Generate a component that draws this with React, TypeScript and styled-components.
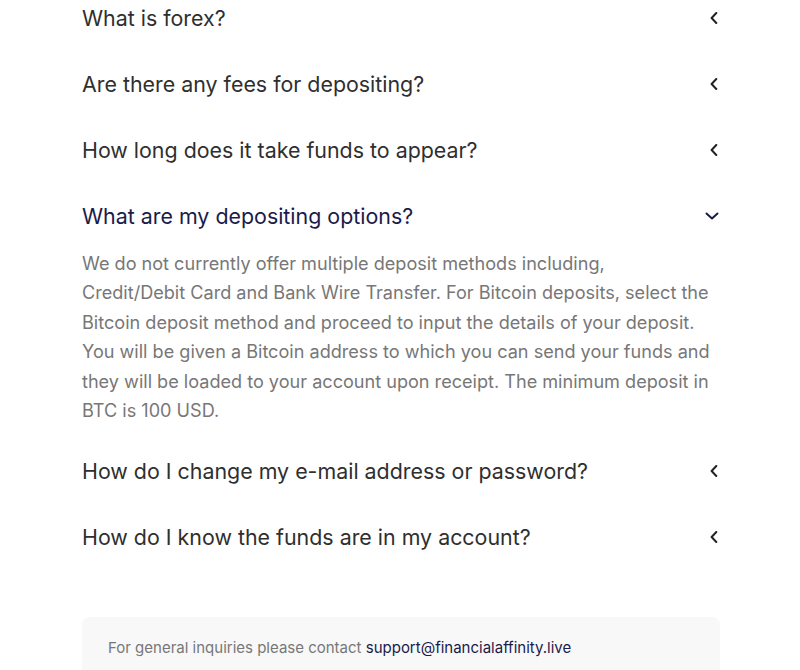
import * as React from 'react'
import styled, { createGlobalStyle } from 'styled-components'

const GlobalStyle = createGlobalStyle`
  html, body {
    margin: 0;
    padding: 0;
    background: #fff;
  }
  body {
    font-family: 'Inter', 'Noto Sans', sans-serif;
    overflow: hidden;
  }
`

const Page = styled.div`
  width: 638px;
  margin: -15px 0 0 82px;
`

const List = styled.div`
  display: flex;
  flex-direction: column;
`

const Item = styled.div<{ $open?: boolean }>`
  display: flex;
  flex-direction: column;
  padding-bottom: ${p => (p.$open ? '13px' : '0')};
`

const Question = styled.div<{ $open?: boolean }>`
  display: flex;
  align-items: center;
  justify-content: space-between;
  height: 66px;
  font-size: 21.4px;
  color: ${p => (p.$open ? '#1b1b4a' : '#2f2f2f')};
  cursor: pointer;
`

const Arrow = styled.span`
  display: flex;
  align-items: center;
  justify-content: center;
  width: 16px;
`

const Answer = styled.p`
  margin: 0;
  max-width: 630px;
  font-size: 18.1px;
  line-height: 29.4px;
  color: #777;
`

const Contact = styled.div`
  margin-top: 47px;
  background: #f8f8f8;
  border-radius: 8px;
  padding: 20px 26px 30px;
  font-size: 15px;
  line-height: 22px;
  color: #777;
`

const Mail = styled.a`
  color: #1b1b4a;
  text-decoration: none;
`

const ChevronLeft = () => (
  <svg width="12" height="12" viewBox="0 0 12 12" fill="none">
    <path d="M10.3 1 L5.6 6 L10.3 11" stroke="#222" strokeWidth="2" strokeLinecap="round" strokeLinejoin="round" />
  </svg>
)

const ChevronDown = () => (
  <svg width="14" height="8" viewBox="0 0 14 8" fill="none">
    <path d="M1.5 1.5 L7 6.5 L12.5 1.5" stroke="#1b1b4a" strokeWidth="2" strokeLinecap="round" strokeLinejoin="round" />
  </svg>
)

const faqs = [
  { q: 'What is forex?' },
  { q: 'Are there any fees for depositing?' },
  { q: 'How long does it take funds to appear?' },
  {
    q: 'What are my depositing options?',
    a: 'We do not currently offer multiple deposit methods including, Credit/Debit Card and Bank Wire Transfer. For Bitcoin deposits, select the Bitcoin deposit method and proceed to input the details of your deposit. You will be given a Bitcoin address to which you can send your funds and they will be loaded to your account upon receipt. The minimum deposit in BTC is 100 USD.',
    open: true,
  },
  { q: 'How do I change my e-mail address or password?' },
  { q: 'How do I know the funds are in my account?' },
]

const App = () => (
  <Page>
    <GlobalStyle />
    <List>
      {faqs.map(f => (
        <Item key={f.q} $open={f.open}>
          <Question $open={f.open}>
            <span>{f.q}</span>
            <Arrow>{f.open ? <ChevronDown /> : <ChevronLeft />}</Arrow>
          </Question>
          {f.open && <Answer>{f.a}</Answer>}
        </Item>
      ))}
    </List>
    <Contact>
      For general inquiries please contact <Mail href="#">support@financialaffinity.live</Mail>
    </Contact>
  </Page>
)

export default App
